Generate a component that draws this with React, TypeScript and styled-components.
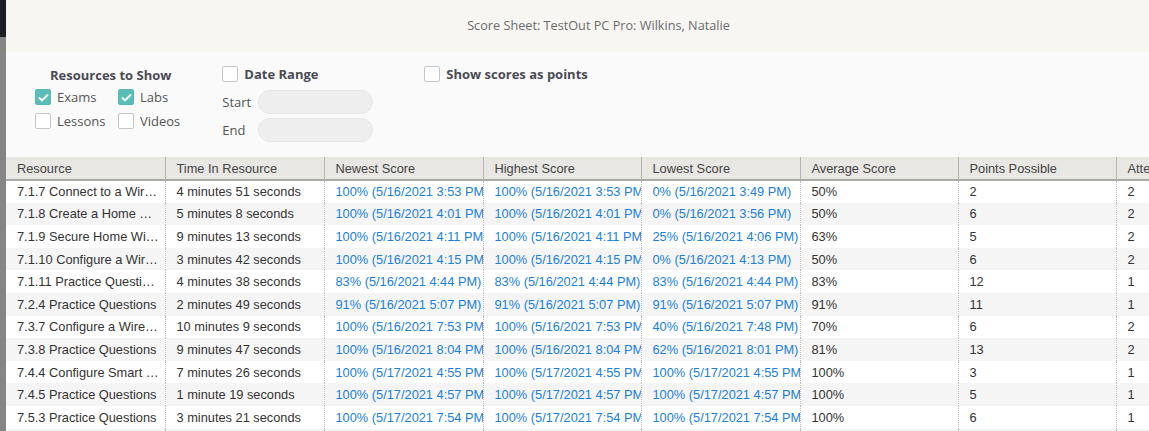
import React from 'react';
import styled, { createGlobalStyle } from 'styled-components';

const GlobalStyle = createGlobalStyle`
  html, body {
    margin: 0;
    padding: 0;
    background: #ffffff;
    overflow: hidden;
  }
`;

const Page = styled.div`
  display: flex;
  width: 1149px;
  height: 431px;
  overflow: hidden;
`;

const Backdrop = styled.div`
  width: 6px;
  flex-shrink: 0;
  display: flex;
  flex-direction: column;
`;

const BackdropTop = styled.div`
  height: 37px;
  background: #1c1e23;
`;

const BackdropBottom = styled.div`
  flex: 1;
  background: #858585;
`;

const Sheet = styled.div`
  flex: 1;
  min-width: 0;
  display: flex;
  flex-direction: column;
  overflow: hidden;
`;

const TitleBar = styled.div`
  height: 52px;
  background: #f7f6f3;
  display: flex;
  align-items: center;
  justify-content: center;
  font-family: 'Open Sans', sans-serif;
  font-size: 12.7px;
  color: #6b6b6b;
  padding-left: 42px;
  padding-bottom: 2px;
  box-sizing: border-box;
`;

const Filters = styled.div`
  height: 105px;
  background: #fafafa;
  display: flex;
  align-items: flex-start;
  padding: 12px 0 0 29px;
  box-sizing: border-box;
  font-family: 'Open Sans', sans-serif;
  font-size: 13px;
  color: #555;
`;

const Group = styled.div`
  display: flex;
  flex-direction: column;
`;

const GroupTitle = styled.div`
  font-weight: 700;
  color: #4b4b55;
  padding-left: 15px;
  margin-top: 2px;
  line-height: 18px;
`;

const CheckGrid = styled.div`
  display: grid;
  grid-template-columns: 83px auto;
  row-gap: 8px;
  margin-top: 5px;
`;

const CheckLabel = styled.label<{ $bold?: boolean }>`
  display: flex;
  align-items: center;
  gap: 6px;
  line-height: 16px;
  font-weight: ${p => (p.$bold ? 700 : 400)};
  color: ${p => (p.$bold ? '#4b4b55' : '#555')};
`;

const Box = styled.span<{ $checked?: boolean }>`
  width: 16px;
  height: 16px;
  box-sizing: border-box;
  border-radius: 2px;
  border: 1px solid ${p => (p.$checked ? '#58b8b3' : '#c6c6c6')};
  background: ${p => (p.$checked ? '#5bbdb7' : '#ffffff')};
  display: inline-flex;
  align-items: center;
  justify-content: center;
  flex-shrink: 0;
`;

const DateGroup = styled.div`
  margin-left: 42px;
  margin-top: 2px;
  display: flex;
  flex-direction: column;
`;

const DateRow = styled.div`
  display: grid;
  grid-template-columns: 36px 115px;
  row-gap: 4px;
  align-items: center;
  margin-top: 8px;
`;

const PillInput = styled.div`
  height: 24px;
  border-radius: 12px;
  background: #eeeeee;
  border: 1px solid #e6e6e6;
  box-sizing: border-box;
`;

const PointsGroup = styled.div`
  margin-left: 51px;
  margin-top: 2px;
`;

const TableWrap = styled.div`
  flex: 1;
  overflow: hidden;
`;

const Table = styled.table`
  border-collapse: collapse;
  table-layout: fixed;
  width: 1280px;
  font-family: 'Liberation Sans', Arial, sans-serif;
  font-size: 12.8px;
  color: #333;
`;

const HeadCell = styled.th`
  height: 23px;
  box-sizing: border-box;
  background: #e8e7e3;
  border-right: 1px solid #b4b4b4;
  border-bottom: 2px solid #aaaaaa;
  text-align: left;
  font-weight: 400;
  color: #444;
  padding: 0 0 0 11px;
  white-space: nowrap;
  overflow: hidden;
`;

const Row = styled.tr<{ $alt: boolean }>`
  height: 22.6px;
  background: ${p => (p.$alt ? '#f5f5f5' : '#ffffff')};
`;

const Cell = styled.td<{ $link?: boolean }>`
  padding: 0 ${p => (p.$link ? '0' : '5px')} 0 11px;
  border-right: 1px dotted #bdbdbd;
  white-space: nowrap;
  overflow: hidden;
  text-overflow: ${p => (p.$link ? 'clip' : 'ellipsis')};
  color: ${p => (p.$link ? '#1a80dc' : '#333')};
`;

const Check = () => (
  <svg width="11" height="9" viewBox="0 0 11 9">
    <path d="M1 4.5 L4 7.5 L10 1.5" fill="none" stroke="#fff" strokeWidth="1.8" />
  </svg>
);

const columns = [
  'Resource',
  'Time In Resource',
  'Newest Score',
  'Highest Score',
  'Lowest Score',
  'Average Score',
  'Points Possible',
  'Attempts',
];

const colWidths = [159, 159, 159, 158, 159, 158, 158, 170];

type RowData = [string, string, string, string, string, string, string, string];

const rows: RowData[] = [
  ['7.1.7 Connect to a Wireless Network', '4 minutes 51 seconds', '100% (5/16/2021 3:53 PM)', '100% (5/16/2021 3:53 PM)', '0% (5/16/2021 3:49 PM)', '50%', '2', '2'],
  ['7.1.8 Create a Home Wireless Network', '5 minutes 8 seconds', '100% (5/16/2021 4:01 PM)', '100% (5/16/2021 4:01 PM)', '0% (5/16/2021 3:56 PM)', '50%', '6', '2'],
  ['7.1.9 Secure Home Wireless Network', '9 minutes 13 seconds', '100% (5/16/2021 4:11 PM)', '100% (5/16/2021 4:11 PM)', '25% (5/16/2021 4:06 PM)', '63%', '5', '2'],
  ['7.1.10 Configure a Wireless Infrastructure', '3 minutes 42 seconds', '100% (5/16/2021 4:15 PM)', '100% (5/16/2021 4:15 PM)', '0% (5/16/2021 4:13 PM)', '50%', '6', '2'],
  ['7.1.11 Practice Questions', '4 minutes 38 seconds', '83% (5/16/2021 4:44 PM)', '83% (5/16/2021 4:44 PM)', '83% (5/16/2021 4:44 PM)', '83%', '12', '1'],
  ['7.2.4 Practice Questions', '2 minutes 49 seconds', '91% (5/16/2021 5:07 PM)', '91% (5/16/2021 5:07 PM)', '91% (5/16/2021 5:07 PM)', '91%', '11', '1'],
  ['7.3.7 Configure a Wireless Adapter', '10 minutes 9 seconds', '100% (5/16/2021 7:53 PM)', '100% (5/16/2021 7:53 PM)', '40% (5/16/2021 7:48 PM)', '70%', '6', '2'],
  ['7.3.8 Practice Questions', '9 minutes 47 seconds', '100% (5/16/2021 8:04 PM)', '100% (5/16/2021 8:04 PM)', '62% (5/16/2021 8:01 PM)', '81%', '13', '2'],
  ['7.4.4 Configure Smart Devices', '7 minutes 26 seconds', '100% (5/17/2021 4:55 PM)', '100% (5/17/2021 4:55 PM)', '100% (5/17/2021 4:55 PM)', '100%', '3', '1'],
  ['7.4.5 Practice Questions', '1 minute 19 seconds', '100% (5/17/2021 4:57 PM)', '100% (5/17/2021 4:57 PM)', '100% (5/17/2021 4:57 PM)', '100%', '5', '1'],
  ['7.5.3 Practice Questions', '3 minutes 21 seconds', '100% (5/17/2021 7:54 PM)', '100% (5/17/2021 7:54 PM)', '100% (5/17/2021 7:54 PM)', '100%', '6', '1'],
  ['7.5.4 Practice Questions', '2 minutes 2 seconds', '100% (5/17/2021 8:01 PM)', '100% (5/17/2021 8:01 PM)', '100% (5/17/2021 8:01 PM)', '100%', '10', '1'],
];

export default function App() {
  return (
    <>
      <GlobalStyle />
      <Page>
        <Backdrop>
          <BackdropTop />
          <BackdropBottom />
        </Backdrop>
        <Sheet>
          <TitleBar>Score Sheet: TestOut PC Pro: Wilkins, Natalie</TitleBar>

          <Filters>
            <Group>
              <GroupTitle>Resources to Show</GroupTitle>
              <CheckGrid>
                <CheckLabel><Box $checked><Check /></Box>Exams</CheckLabel>
                <CheckLabel><Box $checked><Check /></Box>Labs</CheckLabel>
                <CheckLabel><Box />Lessons</CheckLabel>
                <CheckLabel><Box />Videos</CheckLabel>
              </CheckGrid>
            </Group>

            <DateGroup>
              <CheckLabel $bold><Box />Date Range</CheckLabel>
              <DateRow>
                <span>Start</span>
                <PillInput />
                <span>End</span>
                <PillInput />
              </DateRow>
            </DateGroup>

            <PointsGroup>
              <CheckLabel $bold><Box />Show scores as points</CheckLabel>
            </PointsGroup>
          </Filters>

          <TableWrap>
            <Table>
              <colgroup>
                {colWidths.map((w, i) => (
                  <col key={i} style={{ width: w }} />
                ))}
              </colgroup>
              <thead>
                <tr>
                  {columns.map(c => (
                    <HeadCell key={c}>{c}</HeadCell>
                  ))}
                </tr>
              </thead>
              <tbody>
                {rows.map((r, i) => (
                  <Row key={i} $alt={i % 2 === 1}>
                    {r.map((v, j) => (
                      <Cell key={j} $link={j >= 2 && j <= 4}>{v}</Cell>
                    ))}
                  </Row>
                ))}
              </tbody>
            </Table>
          </TableWrap>
        </Sheet>
      </Page>
    </>
  );
}
